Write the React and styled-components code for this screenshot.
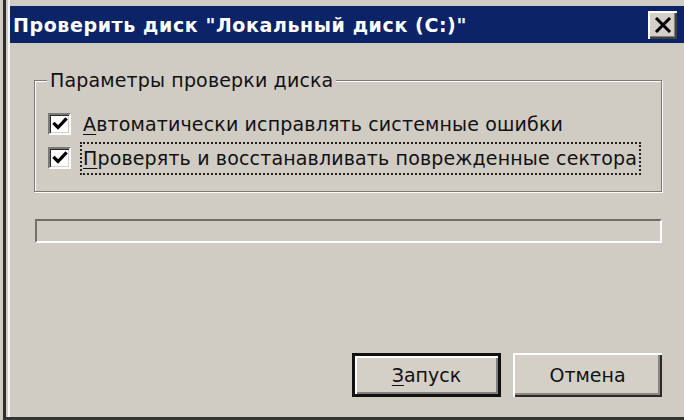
import React from "react";
import styled, { createGlobalStyle } from "styled-components";

const GlobalStyle = createGlobalStyle`
  html, body {
    margin: 0;
    padding: 0;
    background: #d0ccc4;
  }
  * {
    box-sizing: border-box;
  }
`;

const FONT = `"DejaVu Sans", "Liberation Sans", sans-serif`;

const Screen = styled.div`
  width: 684px;
  height: 420px;
  display: flex;
  padding-left: 3px;
  overflow: hidden;
  background: #d0ccc4;
  font-family: ${FONT};
  color: #111;
`;

const Frame = styled.div`
  flex: 1;
  display: flex;
  border-left: 3px solid #2c2c2c;
  border-bottom: 3px solid #353535;
  padding-left: 2px;
`;

const Window = styled.div`
  flex: 1;
  display: flex;
  flex-direction: column;
  border-left: 2px solid #f6f5f2;
  padding-top: 6px;
`;

const TitleBar = styled.div`
  height: 37px;
  display: flex;
  align-items: center;
  justify-content: space-between;
  padding: 0 7px 0 3px;
  background: #0b2468;
`;

const TitleText = styled.span`
  color: #fff;
  font-weight: bold;
  font-size: 19px;
  letter-spacing: 0.6px;
  white-space: nowrap;
`;

const CloseButton = styled.button`
  width: 29px;
  height: 28px;
  padding: 0;
  border: none;
  display: flex;
  align-items: center;
  justify-content: center;
  background: #d4d0c8;
  box-shadow: inset 2px 2px #fff, inset -2px -2px #404040, inset -3px -3px #808080;
`;

const Body = styled.div`
  flex: 1;
  display: flex;
  flex-direction: column;
  padding: 25px 22px 20px 24px;
`;

const Group = styled.fieldset`
  margin: 0;
  padding: 15px 0 16px 13px;
  border: 1px solid #7c7974;
  box-shadow: inset 1px 1px #fdfdfd, 1px 1px #fdfdfd;
`;

const Legend = styled.legend`
  margin-left: -1px;
  padding: 0 3px;
  font-size: 19px;
  line-height: 24px;
  letter-spacing: 0.15px;
  background: #d0ccc4;
`;

const OptionRow = styled.div`
  height: 34px;
  display: flex;
  align-items: center;
`;

const CheckBox = styled.span`
  width: 23px;
  height: 22px;
  display: flex;
  align-items: center;
  justify-content: center;
  margin-right: 9px;
  background: #fff;
  border: 2px solid;
  border-color: #7a7a7a #fbfbfb #fbfbfb #7a7a7a;
  box-shadow: inset 1px 1px #2a2a2a, inset -1px -1px #d4d0c8;
`;

const OptionLabel = styled.span`
  font-size: 19px;
  line-height: 27px;
  letter-spacing: 0.15px;
  padding: 1px 2px 1px 1px;
  white-space: nowrap;
  border: 2px dotted ${(p) => (p.$focused ? "#222" : "transparent")};
`;

const Key = styled.span`
  text-decoration: underline;
  text-underline-offset: 3px;
`;

const Progress = styled.div`
  height: 24px;
  margin: 27px 0 0 1px;
  border: 2px solid;
  border-color: #6f6b66 #fdfdfd #fdfdfd #76726c;
`;

const ButtonRow = styled.div`
  margin-top: auto;
  display: flex;
  justify-content: flex-end;
  gap: 12px;
`;

const Button = styled.button`
  width: 149px;
  height: 44px;
  padding: 0;
  font-family: ${FONT};
  font-size: 19px;
  color: #111;
  background: #d4d0c8;
  border: ${(p) => (p.$default ? "3px solid #111" : "none")};
  box-shadow: ${(p) =>
    p.$default
      ? "inset 2px 2px #fff, inset -2px -2px #808080"
      : "inset 2px 2px #fff, inset -2px -2px #2a2a2a, inset -4px -4px #8a8680"};
`;

const Check = () => (
  <svg width="16" height="16" viewBox="0 0 16 16">
    <polyline
      points="2.5,8 6,11.5 13.5,3.5"
      fill="none"
      stroke="#000"
      strokeWidth="3.2"
      strokeLinecap="square"
    />
  </svg>
);

const CloseIcon = () => (
  <svg width="18" height="16" viewBox="0 0 18 16">
    <path d="M2 1 L16 15 M16 1 L2 15" stroke="#000" strokeWidth="3" />
  </svg>
);

const options = [
  { key: "А", rest: "втоматически исправлять системные ошибки" },
  { key: "П", rest: "роверять и восстанавливать поврежденные сектора", focused: true },
];

export default function App() {
  return (
    <>
      <GlobalStyle />
      <Screen>
        <Frame>
          <Window>
            <TitleBar>
              <TitleText>Проверить диск "Локальный диск (C:)"</TitleText>
              <CloseButton aria-label="Закрыть">
                <CloseIcon />
              </CloseButton>
            </TitleBar>
            <Body>
              <Group>
                <Legend>Параметры проверки диска</Legend>
                {options.map((opt) => (
                  <OptionRow key={opt.key}>
                    <CheckBox>
                      <Check />
                    </CheckBox>
                    <OptionLabel $focused={opt.focused}>
                      <Key>{opt.key}</Key>
                      {opt.rest}
                    </OptionLabel>
                  </OptionRow>
                ))}
              </Group>
              <Progress />
              <ButtonRow>
                <Button $default>
                  <Key>З</Key>апуск
                </Button>
                <Button>Отмена</Button>
              </ButtonRow>
            </Body>
          </Window>
        </Frame>
      </Screen>
    </>
  );
}
